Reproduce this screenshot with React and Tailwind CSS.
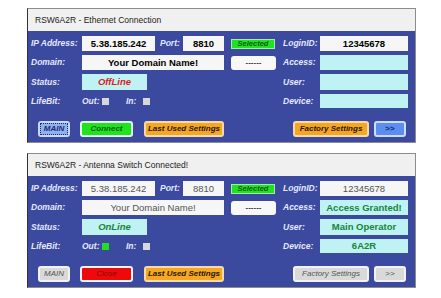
import React from 'react';

const font = { fontFamily: '"Liberation Sans", Arial, sans-serif' };

const Label = ({ children, className = '' }) => (
  <div className={`text-[8.5px] font-bold italic text-[#e4e8ff] leading-none ${className}`}>{children}</div>
);

const Field = ({ children, cyan, className = '', textClass = 'font-bold text-black' }) => (
  <div
    className={`h-full flex items-center justify-center text-[9.5px] leading-none ${cyan ? 'bg-[#bff3f3]' : 'bg-[#f6f6f6]'} ${textClass} ${className}`}
  >
    {children}
  </div>
);

const Btn = ({ children, className = '' }) => (
  <div
    className={`h-[16px] flex items-center justify-center rounded-[3px] border-2 text-[8px] font-bold italic leading-none whitespace-nowrap ${className}`}
  >
    {children}
  </div>
);

const Check = ({ on }) => (
  <div className={`w-[7px] h-[7px] ${on ? 'bg-[#22dd22]' : 'bg-[#d8d8d8]'}`} />
);

const Window = ({ title, online, className = '' }) => {
  const dim = 'font-normal text-[#555]';
  const green = 'font-bold text-[#17853a]';
  return (
    <div className={`ml-[27px] w-[389px] border border-[#8c8c8c] border-l-[#333] ${className}`}>
      <div className="h-[22px] bg-[#f0f0f0] pl-[7px] flex items-center text-[8.5px] text-[#222]">{title}</div>
      <div className="h-[111px] bg-[#3b4a9f] pt-[5px] pl-[3px] pr-[7px] flex flex-col">
        {/* row 1 */}
        <div className="h-[15px] flex items-center">
          <Label className="w-[51px]">IP Address:</Label>
          <Field className="w-[73px]" textClass={online ? dim : 'font-bold text-black'}>5.38.185.242</Field>
          <Label className="ml-[5px] w-[23px]">Port:</Label>
          <Field className="w-[41px]" textClass={online ? dim : 'font-bold text-black'}>8810</Field>
          <div className="ml-[7px] w-[44px] h-[10px] bg-[#22e022] border border-[#9ef09e] flex items-center justify-center text-[7.5px] font-bold italic text-[#0d5a12] leading-none">
            Selected
          </div>
          <Label className="ml-auto w-[37px]">LoginID:</Label>
          <Field className="w-[88px]" textClass={online ? dim : 'font-bold text-black'}>12345678</Field>
        </div>
        {/* row 2 */}
        <div className="h-[15px] mt-[4px] flex items-center">
          <Label className="w-[51px]">Domain:</Label>
          <Field className="w-[142px]" textClass={online ? dim : 'font-bold text-black'}>Your Domain Name!</Field>
          <div className="ml-[7px] w-[45px] h-[14px] rounded-[3px] bg-[#f8f8f8] flex items-center justify-center text-[8px] font-bold text-[#333] leading-none">
            ------
          </div>
          <Label className="ml-auto w-[37px]">Access:</Label>
          <Field cyan className="w-[88px]" textClass={green}>{online ? 'Access Granted!' : ''}</Field>
        </div>
        {/* row 3 */}
        <div className="h-[16px] mt-[4px] flex items-center">
          <Label className="w-[51px]">Status:</Label>
          <Field
            cyan
            className="w-[65px]"
            textClass={online ? 'font-bold italic text-[#17853a]' : 'font-bold italic text-[#e01818]'}
          >
            {online ? 'OnLine' : 'OffLine'}
          </Field>
          <Label className="ml-auto w-[37px]">User:</Label>
          <Field cyan className="w-[88px]" textClass={green}>{online ? 'Main Operator' : ''}</Field>
        </div>
        {/* row 4 */}
        <div className="h-[14px] mt-[4px] flex items-center">
          <Label className="w-[51px]">LifeBit:</Label>
          <Label className="w-[20px]">Out:</Label>
          <Check on={online} />
          <Label className="ml-[17px] w-[17px]">In:</Label>
          <Check />
          <Label className="ml-auto w-[37px]">Device:</Label>
          <Field cyan className="w-[88px]" textClass={green}>{online ? '6A2R' : ''}</Field>
        </div>
        {/* buttons */}
        <div className="mt-[13px] flex items-center">
          {online ? (
            <Btn className="ml-[7px] w-[32px] bg-[#d9d9d9] border-[#f2f2f2] text-[#555] font-normal">MAIN</Btn>
          ) : (
            <Btn className="ml-[7px] w-[32px] bg-[#8fb0f2] border-[#c8d8ff] text-[#1a2a6a] outline outline-1 outline-dotted outline-[#1a2a6a] -outline-offset-[3px]">
              MAIN
            </Btn>
          )}
          {online ? (
            <Btn className="ml-[10px] w-[53px] bg-[#ee0a0a] border-[#f4f4f4] text-[#8a0a0a] font-normal">Close</Btn>
          ) : (
            <Btn className="ml-[10px] w-[53px] bg-[#1ee41e] border-[#e8f8e8] text-[#0d5a12]">Connect</Btn>
          )}
          <Btn className="ml-[11px] w-[80px] bg-[#f5a623] border-[#f8d9a8] text-[#2a1a00]">Last Used Settings</Btn>
          {online ? (
            <>
              <Btn className="ml-auto w-[76px] bg-[#d9d9d9] border-[#f2f2f2] text-[#555] font-normal">Factory Settings</Btn>
              <Btn className="ml-[5px] mr-[2px] w-[32px] bg-[#d9d9d9] border-[#f2f2f2] text-[#555] font-normal not-italic">&gt;&gt;</Btn>
            </>
          ) : (
            <>
              <Btn className="ml-auto w-[76px] bg-[#f5a623] border-[#f8d9a8] text-[#2a1a00]">Factory Settings</Btn>
              <Btn className="ml-[5px] mr-[2px] w-[32px] bg-[#5b8ef0] border-[#d0dcff] text-[#1a2a6a] not-italic">&gt;&gt;</Btn>
            </>
          )}
        </div>
      </div>
    </div>
  );
};

export default function App() {
  return (
    <div className="w-[441px] h-[298px] bg-white pt-[8px] overflow-hidden" style={font}>
      <Window title="RSW6A2R - Ethernet Connection" />
      <Window title="RSW6A2R - Antenna Switch Connected!" online className="mt-[10px]" />
    </div>
  );
}
